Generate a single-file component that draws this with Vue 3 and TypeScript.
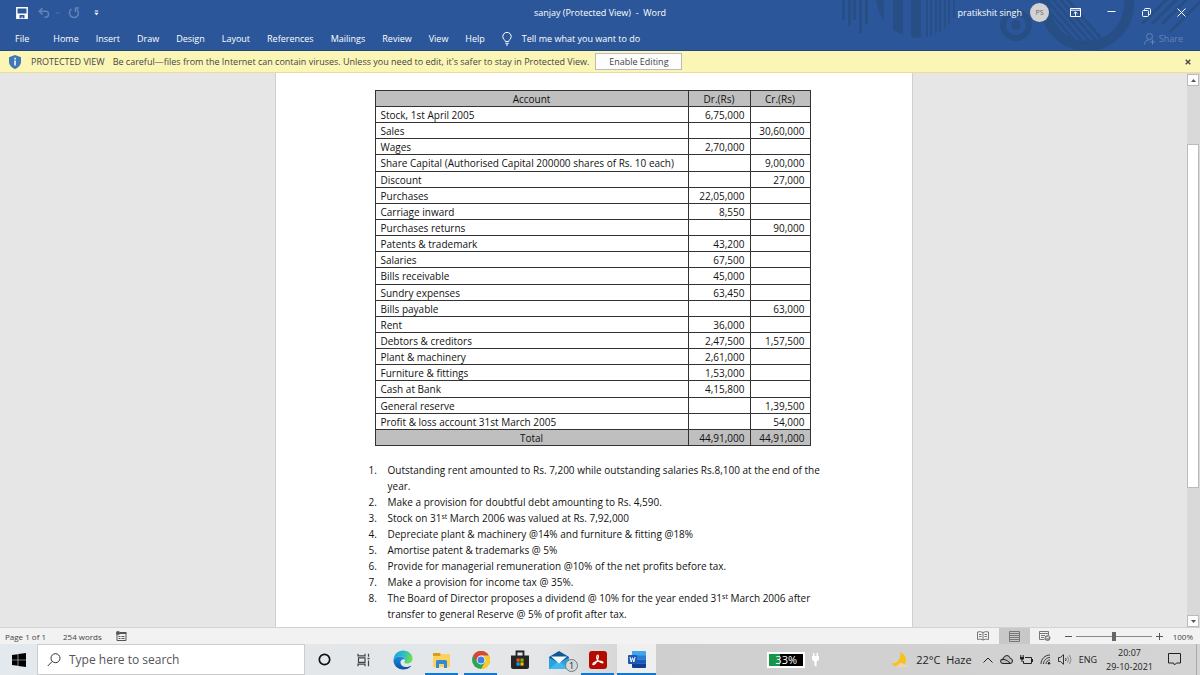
<script setup lang="ts">
import { ref } from 'vue'

interface Row {
  account: string
  dr?: string
  cr?: string
}

const tabs: string[] = ['Home', 'Insert', 'Draw', 'Design', 'Layout', 'References', 'Mailings', 'Review', 'View', 'Help']

const rows: Row[] = [
  { account: 'Stock, 1st April 2005', dr: '6,75,000' },
  { account: 'Sales', cr: '30,60,000' },
  { account: 'Wages', dr: '2,70,000' },
  { account: 'Share Capital (Authorised Capital 200000 shares of Rs. 10 each)', cr: '9,00,000' },
  { account: 'Discount', cr: '27,000' },
  { account: 'Purchases', dr: '22,05,000' },
  { account: 'Carriage inward', dr: '8,550' },
  { account: 'Purchases returns', cr: '90,000' },
  { account: 'Patents & trademark', dr: '43,200' },
  { account: 'Salaries', dr: '67,500' },
  { account: 'Bills receivable', dr: '45,000' },
  { account: 'Sundry expenses', dr: '63,450' },
  { account: 'Bills payable', cr: '63,000' },
  { account: 'Rent', dr: '36,000' },
  { account: 'Debtors & creditors', dr: '2,47,500', cr: '1,57,500' },
  { account: 'Plant & machinery', dr: '2,61,000' },
  { account: 'Furniture & fittings', dr: '1,53,000' },
  { account: 'Cash at Bank', dr: '4,15,800' },
  { account: 'General reserve', cr: '1,39,500' },
  { account: 'Profit & loss account 31st March 2005', cr: '54,000' },
]

const zoom = ref(50)
const search = ref('')
</script>

<template>
  <div class="screen">
    <header class="ribbon">
      <svg class="pattern" viewBox="0 0 370 51" width="370" height="51" aria-hidden="true">
        <defs>
          <clipPath id="disc"><circle cx="88" cy="-4" r="42" /></clipPath>
          <clipPath id="hole"><circle cx="257" cy="4" r="40" /></clipPath>
        </defs>
        <g fill="#284e86">
          <path d="M12 0h3v20h-3zM18 0h3v26h-3zM23 0h3v20h-3zM29 0h3v33h-3zM35 0h3v24h-3z" />
          <g clip-path="url(#disc)">
            <path d="M46 0h8v40h-8zM63 0h10v40H63zM81 0h10v40H81zM96 0h2v40h-2zM100 0h2v40h-2zM105 0h2v40h-2zM109 0h2v40h-2zM114 0h2v40h-2zM118 0h2v40h-2zM123 0h2v40h-2z" />
          </g>
          <circle cx="186" cy="25" r="5" />
        </g>
        <g fill="none" stroke="#284e86">
          <circle cx="186" cy="25" r="13" stroke-width="6" />
          <circle cx="257" cy="4" r="42" stroke-width="10" />
          <g clip-path="url(#hole)" stroke-width="3">
            <path d="M201-10l52 60M208-10l52 60M215-10l52 60M222-10l52 60M229-10l52 60" />
          </g>
          <path d="M312 24l26-26M322 24l27-27M332 24l27-27M340 32l32-32" stroke-width="3" />
        </g>
      </svg>
      <div class="title-row">
        <div class="quick">
          <button class="ico" aria-label="Save">
            <svg width="12" height="12" viewBox="0 0 12 12"><path d="M.8.8h10.400v10.400H.8z" fill="none" stroke="#fff" stroke-width="1.400" /><path d="M1 6.500h10v4.500H1z" fill="#fff" /><path d="M3.500 8h5v3.200H6.500V9.500h-1v1.700h-2z" fill="#2b579a" /></svg>
          </button>
          <button class="ico" aria-label="Undo">
            <svg width="12" height="12" viewBox="0 0 12 12" fill="none" stroke="#6384b6" stroke-width="1.500"><path d="M4.500 1L1.200 4.200l3.300 3.200M1.500 4.200H8c3.500 0 3.500 6-.5 6H6.500" /></svg>
          </button>
          <svg class="dim-caret" width="5" height="4" viewBox="0 0 5 4"><path d="M.5.8l2 2 2-2" fill="none" stroke="#5578ae" /></svg>
          <button class="ico redo" aria-label="Redo">
            <svg width="12" height="12" viewBox="0 0 12 12" fill="none" stroke="#6384b6" stroke-width="1.500"><path d="M3.500 2.200a4.500 4.500 0 1 0 5.300.3M11 1H7.500v4" /></svg>
          </button>
          <button class="ico more" aria-label="Customize">
            <svg width="5" height="6" viewBox="0 0 5 6" fill="#fff"><path d="M.8.500h3.400v1H.8zM.3 2.800h4.400L2.500 5.200z" /></svg>
          </button>
        </div>
        <div class="title">sanjay (Protected View) &nbsp;-&nbsp; Word</div>
        <div class="account">
          <span>pratikshit singh</span>
          <span class="avatar">PS</span>
          <button class="ico" aria-label="Ribbon options">
            <svg width="11" height="9" viewBox="0 0 11 9" fill="none" stroke="#fff"><path d="M.5.5h10v8H.5zM.5 2.200h10M5.500 7.800V4M3.700 5.600l1.800-1.800 1.800 1.800" /></svg>
          </button>
          <button class="ico" aria-label="Minimize">
            <svg width="9" height="9" viewBox="0 0 9 9"><path d="M.5 3.500h8" stroke="#fff" /></svg>
          </button>
          <button class="ico" aria-label="Restore">
            <svg width="9" height="9" viewBox="0 0 9 9" fill="none" stroke="#fff"><rect x=".5" y="2.500" width="6" height="6" rx="1" /><path d="M2.500 2.500V1.500q0-1 1-1h4q1 0 1 1v4q0 1-1 1h-1" /></svg>
          </button>
          <button class="ico" aria-label="Close">
            <svg width="9" height="9" viewBox="0 0 9 9"><path d="M.5.5l8 8m0-8l-8 8" stroke="#fff" /></svg>
          </button>
        </div>
      </div>
      <nav class="tabs">
        <button class="file">File</button>
        <button v-for="t in tabs" :key="t">{{ t }}</button>
        <button class="tell">
          <svg width="10" height="14" viewBox="0 0 10 14" fill="none" stroke="#fff"><path d="M3.300 9.500C3.300 8 .8 7 .8 4.600a4.200 4.200 0 0 1 8.400 0C9.200 7 6.700 8 6.700 9.500zM3.300 11.300h3.400M4 13h2" /></svg>
          Tell me what you want to do
        </button>
        <button class="share" disabled>
          <svg width="12" height="12" viewBox="0 0 12 12" fill="none" stroke="#6384b6"><circle cx="5.500" cy="3.500" r="3" /><path d="M.5 11.500c0-3 2-4.500 4.500-4.500M8.500 6.500v5M6 9h5" /></svg>
          Share
        </button>
      </nav>
    </header>

    <section class="notice">
      <svg width="12" height="14" viewBox="0 0 12 14"><path d="M6 0l6 2.200v4.500C12 10 9.500 12.500 6 14 2.500 12.500 0 10 0 6.700V2.200z" fill="#3f78b8" /><path d="M5.300 2.800h1.500v1.600H5.300zM5.300 5.500h1.500v5H5.300z" fill="#fff" /></svg>
      <strong>PROTECTED VIEW</strong>
      <span>Be careful—files from the Internet can contain viruses. Unless you need to edit, it's safer to stay in Protected View.</span>
      <button class="enable">Enable Editing</button>
      <button class="dismiss" aria-label="Dismiss">
        <svg width="6" height="6" viewBox="0 0 6 6"><path d="M.7.700l4.600 4.600m0-4.600L.7 5.300" stroke="#444" stroke-width="1.300" /></svg>
      </button>
    </section>

    <main class="workspace">
      <div class="canvas">
        <article class="page">
          <table>
            <thead>
              <tr><th>Account</th><th class="dr">Dr.(Rs)</th><th class="cr">Cr.(Rs)</th></tr>
            </thead>
            <tbody>
              <tr v-for="r in rows" :key="r.account">
                <td>{{ r.account }}</td><td class="num">{{ r.dr }}</td><td class="num">{{ r.cr }}</td>
              </tr>
            </tbody>
            <tfoot>
              <tr><td class="total">Total</td><td class="num">44,91,000</td><td class="num">44,91,000</td></tr>
            </tfoot>
          </table>
          <ol>
            <li>Outstanding rent amounted to Rs. 7,200 while outstanding salaries Rs.8,100 at the end of the<br>year.</li>
            <li>Make a provision for doubtful debt amounting to Rs. 4,590.</li>
            <li>Stock on 31<sup>st</sup> March 2006 was valued at Rs. 7,92,000</li>
            <li>Depreciate plant &amp; machinery @14% and furniture &amp; fitting @18%</li>
            <li>Amortise patent &amp; trademarks @ 5%</li>
            <li>Provide for managerial remuneration @10% of the net profits before tax.</li>
            <li>Make a provision for income tax @ 35%.</li>
            <li>The Board of Director proposes a dividend @ 10% for the year ended 31<sup>st</sup> March 2006 after<br>transfer to general Reserve @ 5% of profit after tax.</li>
          </ol>
        </article>
      </div>
      <div class="scrollbar">
        <button aria-label="Scroll up"><svg width="5" height="3" viewBox="0 0 5 3"><path d="M0 3L2.500 0 5 3z" fill="#555" /></svg></button>
        <div class="track"><div class="thumb"></div></div>
        <button aria-label="Scroll down"><svg width="5" height="3" viewBox="0 0 5 3"><path d="M0 0h5L2.500 3z" fill="#555" /></svg></button>
      </div>
    </main>

    <footer class="status">
      <span class="pages">Page 1 of 1</span>
      <span class="words">254 words</span>
      <svg width="11" height="10" viewBox="0 0 11 10"><path d="M1 2.500h9v7H1z" fill="none" stroke="#555" /><path d="M4 1h6.500v2H4zM2.500 5h2v1h-2zM5.500 5h3v1h-3zM2.500 7h2v1h-2zM5.500 7h3v1h-3z" fill="#555" /><circle cx="2" cy="2" r="2" fill="#555" /></svg>
      <div class="views">
        <button aria-label="Read mode"><svg width="12" height="10" viewBox="0 0 12 10" fill="none" stroke="#777"><path d="M6 1.500Q3.500 0 .5 1v7.500q3-1 5.500.5 2.500-1.500 5.500-.5V1Q8.500 0 6 1.500V9M2 3.500h2.500M2 5.500h2.500M7.500 3.500H10M7.500 5.500H10" /></svg></button>
        <button class="on" aria-label="Print layout"><svg width="11" height="11" viewBox="0 0 11 11" fill="none" stroke="#777"><path d="M.5.5h10v10H.5zM.5 2.500h10M.5 4.500h10M.5 6.500h10M.5 8.500h10" /></svg></button>
        <button aria-label="Web layout"><svg width="12" height="10" viewBox="0 0 12 10" fill="none" stroke="#777"><path d="M5.500 8.500h-5v-8h9V4M.5 2.500h9M2 4.500h4M2 6.500h3" /><circle cx="8.500" cy="7" r="2.500" fill="#999" /><path d="M7 7l3-1" stroke="#eee" /></svg></button>
      </div>
      <button class="step" aria-label="Zoom out"><svg width="7" height="7" viewBox="0 0 7 7"><path d="M0 3.500h7" stroke="#555" /></svg></button>
      <input v-model="zoom" type="range" min="0" max="100" aria-label="Zoom">
      <button class="step" aria-label="Zoom in"><svg width="7" height="7" viewBox="0 0 7 7"><path d="M0 3.500h7M3.500 0v7" stroke="#555" /></svg></button>
      <span class="percent">100%</span>
    </footer>

    <div class="taskbar">
      <button class="start" aria-label="Start">
        <svg width="14" height="14" viewBox="0 0 14 14"><path d="M0 2l5.700-.8v5.500H0zM6.300 1.100L14 0v6.700H6.300zM0 7.300h5.700v5.500L0 12zM6.300 7.300H14V14l-7.700-1.100z" /></svg>
      </button>
      <label class="search">
        <svg width="14" height="14" viewBox="0 0 14 14" fill="none" stroke="#333"><circle cx="8.500" cy="5.200" r="4.500" /><path d="M5.300 8.400L.7 13" /></svg>
        <input v-model="search" type="text" placeholder="Type here to search" aria-label="Type here to search">
      </label>
      <div class="apps">
        <button aria-label="Cortana"><svg width="13" height="13" viewBox="0 0 13 13"><circle cx="6.500" cy="6.500" r="5.200" fill="none" stroke="#111" stroke-width="1.700" /></svg></button>
        <button aria-label="Task view"><svg width="14" height="14" viewBox="0 0 14 14" fill="none" stroke="#444" stroke-width="1.200"><path d="M1 .8v2h7v-2M1 13.200v-2h7v2M1.500 4.800h6.500v4.500H1.500zM11.500.8v3M11.500 7.500v5.700" /><path d="M10.500 4.800h2v1.500h-2z" fill="#444" stroke="none" /></svg></button>
        <button aria-label="Edge">
          <svg width="20" height="20" viewBox="0 0 20 20">
            <defs>
              <linearGradient id="ea" x1="0" x2="1" y1="0" y2=".3"><stop stop-color="#1b9de2" /><stop offset=".6" stop-color="#2dbfc2" /><stop offset="1" stop-color="#6bdc52" /></linearGradient>
              <linearGradient id="eb" x1="0" x2="0" y1="0" y2="1"><stop stop-color="#1b8fe0" /><stop offset="1" stop-color="#0c4fa8" /></linearGradient>
            </defs>
            <path d="M.5 10C1 4 5 .5 10 .5c6 0 9.500 4 9.500 8 0 3.500-2.500 5-5.500 5-2 0-3-1-2.500-1.800C13 9.500 11 7 8 6.500 4.500 6 1.500 7.500.5 10z" fill="url(#ea)" />
            <path d="M.5 10C1.500 7.500 4.500 6 8 6.500c2 .4 3.600 1.700 3.900 3.200C10 8.500 7 10 7.500 13c.6 3.200 4.500 5 8.500 3.500 1-.4 2-.9 2.200-.5C16.500 18.500 13.500 19.500 10 19.500 4.500 19.500.3 15 .5 10z" fill="url(#eb)" />
          </svg>
        </button>
        <button class="open" aria-label="File Explorer"><svg width="18" height="16" viewBox="0 0 18 16"><path d="M0 1h7l1 2v3H0z" fill="#dc9d16" /><path d="M0 4h7l1-2h9v13H0z" fill="#fbd25c" /><path d="M3 16V9.500Q3 8 4.500 8h8Q14 8 14 9.500V16h-3v-4H6v4z" fill="#348ad0" /></svg></button>
        <button class="open" aria-label="Chrome"><svg width="18" height="18" viewBox="0 0 18 18"><circle cx="9" cy="9" r="9" fill="#2da450" /><path d="M1.200 4.500A9 9 0 0 1 16.800 4.500H9L5.100 11.200z" fill="#db4437" /><path d="M16.800 4.500A9 9 0 0 1 9 18l3.900-6.700L9 4.500z" fill="#fbc928" /><circle cx="9" cy="9" r="4.400" fill="#fff" /><circle cx="9" cy="9" r="3.500" fill="#3f7de8" /></svg></button>
        <button aria-label="Store"><svg width="20" height="20" viewBox="0 0 20 20"><path d="M6.500 6V1.500h7V6" fill="none" stroke="#222" stroke-width="1.800" /><path d="M1 5.500h18V17q0 2-2 2H3q-2 0-2-2z" fill="#252525" /><path d="M6.500 8.500h3.200v3.200H6.500z" fill="#f25022" /><path d="M10.400 8.500h3.200v3.200h-3.200z" fill="#7fba00" /><path d="M6.500 12.400h3.200v3.200H6.500z" fill="#00a4ef" /><path d="M10.400 12.400h3.200v3.200h-3.200z" fill="#ffb900" /></svg></button>
        <button class="mail" aria-label="Mail">
          <svg width="20" height="18" viewBox="0 0 20 18"><path d="M0 6l10-6 10 6v12H0z" fill="#0f5797" /><path d="M0 6.500L10 12l10-5.500V18H0z" fill="#27a3e2" /><path d="M0 18l10-8 10 8z" fill="#41b9ef" /><path d="M2 5.500h16l-8 7z" fill="#f6f8fa" /></svg>
          <span class="badge">1</span>
        </button>
        <button class="open" aria-label="Acrobat"><svg width="18" height="18" viewBox="0 0 18 18"><rect width="18" height="18" rx="3" fill="#b30b00" /><path d="M4 13.500c-1-1 3-3 5-3.300s5 .2 5 1.200-3.500 0-5.200-2S7.600 4 8.700 4s.8 3.300-.7 6-3.200 4.300-4 3.500z" fill="none" stroke="#fff" stroke-width="1.200" /></svg></button>
        <button class="open current" aria-label="Word"><svg width="18" height="17" viewBox="0 0 18 17"><path d="M4 0h13q1 0 1 1v4H4z" fill="#41a5ee" /><path d="M4 4.500h14v4.200H4z" fill="#2b7cd3" /><path d="M4 8.500h14v4.200H4z" fill="#185abd" /><path d="M4 12.500h14V16q0 1-1 1H5q-1 0-1-1z" fill="#103f91" /><rect y="4" width="9" height="9" rx="1" fill="#1d58b5" /><path d="M2 6l1.200 5 1.300-4.300L5.800 11 7 6" fill="none" stroke="#fff" /></svg></button>
      </div>
      <div class="tray">
        <div class="charge"><span>33%</span></div>
        <svg class="plug" width="7" height="13" viewBox="0 0 7 13" fill="#fff"><path d="M1 0h1.500v3H1zM4.500 0H6v3H4.500zM0 3h7v2q0 3-2.500 3.500V13h-2V8.500Q0 8 0 5z" /></svg>
        <svg class="moon" width="18" height="16" viewBox="0 0 18 16"><path d="M9 0c8 3 8 13 .5 14.500C5 15.500 2 14 .5 11.500 6 12 10.500 7 9 0z" fill="#f8c21c" /><path d="M5 15q0-2 2.200-2 1-2.500 3.500-2t2.300 2q3-.5 4.500 2z" fill="#efd3ae" /></svg>
        <span class="weather">22°C&nbsp; Haze</span>
        <svg width="10" height="6" viewBox="0 0 10 6"><path d="M.5 5.500L5 1l4.500 4.500" fill="none" stroke="#222" /></svg>
        <svg width="13" height="9" viewBox="0 0 13 9" fill="none" stroke="#222"><path d="M3 8.500q-2.500 0-2.500-2.300T3 4q.8-3.500 4-3.500 2.500 0 3.300 3 2.200 0 2.200 2.500T10 8.500z" fill="#bbb" /><path d="M1 5q4-2 9 3" /></svg>
        <svg width="13" height="10" viewBox="0 0 13 10" fill="none" stroke="#222"><path d="M5 2.500h6.500v6H3.500V6M12.500 4v3M.8 0v2M3.200 0v2" /><path d="M0 2h4v2L2.500 5v2h-1V5L0 4z" fill="#222" stroke="none" /></svg>
        <svg width="11" height="11" viewBox="0 0 11 11" fill="none" stroke="#333"><path d="M1 10C1 5 5 1 10 1M3.500 10c0-3.500 3-6.500 6.500-6.500M6 10c0-2.200 1.800-4 4-4" /><circle cx="9" cy="9.200" r="1.200" fill="#222" stroke="none" /></svg>
        <svg width="14" height="11" viewBox="0 0 14 11" fill="none" stroke="#333"><path d="M.5 3.500h2l3-2.800v9.600l-3-2.800h-2zM7.500 4q1 1.500 0 3" /><path d="M9.500 2.500q2 3 0 6M11.500 1q3 4.500 0 9" stroke="#888" /></svg>
        <span class="lang">ENG</span>
        <div class="clock"><span>20:07</span><span>29-10-2021</span></div>
        <button class="action" aria-label="Notifications"><svg width="13" height="13" viewBox="0 0 13 13" fill="none" stroke="#222"><path d="M.5.5h12v9.500H8.500L6.500 12 5.500 10h-5z" /></svg></button>
        <span class="peek"></span>
      </div>
    </div>
  </div>
</template>

<style>
body {
  margin: 0;
}
</style>

<style scoped>
.screen {
  display: flex;
  flex-direction: column;
  height: 100vh;
  overflow: hidden;
  font-family: "Open Sans", "Noto Sans", sans-serif;
  font-size: 8px;
  color: #333;
}
button {
  display: flex;
  align-items: center;
  justify-content: center;
  padding: 0;
  border: 0;
  background: none;
  color: inherit;
  font: inherit;
  white-space: nowrap;
}
svg {
  display: block;
  flex: none;
}

/* ribbon */
.ribbon {
  position: relative;
  flex: none;
  background: #2b579a;
  color: #fff;
  border-bottom: 1px solid #22497f;
}
.pattern {
  position: absolute;
  top: 0;
  right: 0;
}
.title-row {
  position: relative;
  display: grid;
  grid-template-columns: 1fr auto 1fr;
  align-items: center;
  height: 25px;
}
.quick {
  display: flex;
  align-items: center;
  padding-left: 16px;
}
.quick .ico + .ico {
  margin-left: 10px;
}
.dim-caret {
  margin: 0 8px 0 5px;
}
.quick .redo + .more {
  margin-left: 14px;
}
.title {
  font-size: 9px;
}
.account {
  display: flex;
  align-items: center;
  justify-content: flex-end;
  padding-right: 14px;
  font-size: 9px;
}
.avatar {
  width: 19px;
  margin: 0 21px 0 8px;
  border-radius: 50%;
  background: #d2d2d2;
  color: #666;
  font-size: 7px;
  line-height: 19px;
  text-align: center;
}
.account .ico + .ico {
  margin-left: 26px;
}
.tabs {
  position: relative;
  display: flex;
  align-items: center;
  gap: 17px;
  height: 25px;
  padding: 2px 17px 0 15px;
  box-sizing: border-box;
  font-size: 9px;
}
.file {
  margin-right: 7px;
}
.tell {
  gap: 10px;
}
.share {
  gap: 3px;
  margin-left: auto;
  color: #6384b6;
}

/* protected view bar */
.notice {
  display: flex;
  flex: none;
  align-items: center;
  height: 22px;
  padding: 0 9px;
  box-sizing: border-box;
  border-bottom: 1px solid #e6dfa0;
  background: #fcf6b6;
  color: #444;
  font-size: 9px;
  white-space: nowrap;
}
.notice strong {
  margin: 0 8px 0 10px;
  font-weight: 400;
}
.enable {
  width: 87px;
  height: 17px;
  margin-left: 6px;
  border: 1px solid #bbb;
  background: #fdfdfd;
}
.dismiss {
  margin-left: auto;
}

/* document */
.workspace {
  display: flex;
  flex: 1;
  min-height: 0;
  background: #e6e6e6;
}
.canvas {
  display: flex;
  flex: 1;
  justify-content: center;
  overflow: hidden;
}
.page {
  flex: 0 1 638px;
  padding: 17px 80px 0 93px;
  box-sizing: border-box;
  border: solid #cfcfcf;
  border-width: 0 1px;
  background: #fff;
  color: #111;
  font-size: 10px;
  line-height: 16px;
}
table {
  width: 436px;
  height: 356px;
  margin-left: 6px;
  border-collapse: collapse;
  table-layout: fixed;
}
th,
td {
  height: 14px;
  padding: 1px 5px 0;
  border: 1px solid #333;
  font-weight: 400;
  line-height: 14px;
  white-space: nowrap;
}
th,
tfoot td {
  background: #bfbfbf;
}
.dr {
  width: 51px;
}
.cr {
  width: 49px;
}
.num {
  text-align: right;
}
.total {
  text-align: center;
}
ol {
  margin: 16px 0 0;
  padding-left: 19px;
  list-style: none;
  counter-reset: note;
  white-space: nowrap;
}
li {
  counter-increment: note;
}
li::before {
  content: counter(note) ".";
  display: inline-block;
  width: 19px;
  margin-left: -19px;
}
sup {
  font-size: 7px;
  line-height: 0;
  vertical-align: 3px;
}
.scrollbar {
  display: flex;
  flex-direction: column;
  width: 13px;
  padding: 1px 1px 0 0;
  box-sizing: border-box;
  background: #d9d9d9;
}
.scrollbar button {
  height: 12px;
  border: 1px solid #bbb;
  background: #fdfdfd;
}
.track {
  flex: 1;
  padding-top: 58px;
}
.thumb {
  height: 73%;
  border: 1px solid #bbb;
  box-sizing: border-box;
  background: #fff;
}

/* status bar */
.status {
  display: flex;
  flex: none;
  align-items: center;
  height: 17px;
  padding: 0 7px 0 5px;
  box-sizing: border-box;
  border-top: 1px solid #d2d2d2;
  background: #f2f2f2;
  color: #444;
}
.pages {
  width: 58px;
}
.words {
  width: 53px;
}
.views {
  display: flex;
  align-self: stretch;
  margin-left: auto;
}
.views button {
  width: 31px;
}
.views .on {
  background: #c8c8c8;
}
.step {
  margin: 0 4px;
}
.status input {
  width: 76px;
  height: 11px;
  margin: 0;
  appearance: none;
  background: linear-gradient(#888, #888) center / 100% 1px no-repeat;
}
.status input::-webkit-slider-thumb {
  width: 4px;
  height: 9px;
  appearance: none;
  background: #666;
}
.percent {
  margin-left: 6px;
}

/* taskbar */
.taskbar {
  display: flex;
  flex: none;
  height: 31px;
  background: linear-gradient(90deg, #e3e9ec, #e4e6e8 45%, #cfcfcf 55%, #d4d4d4);
  color: #222;
}
.start {
  width: 37px;
}
.search {
  display: flex;
  align-items: center;
  gap: 8px;
  width: 268px;
  padding-left: 9px;
  box-sizing: border-box;
  border: 1px solid #ccc;
  background: #fff;
}
.search input {
  flex: 1;
  min-width: 0;
  padding: 0;
  border: 0;
  outline: 0;
  background: none;
  font-family: inherit;
  font-size: 12px;
}
.search input::placeholder {
  color: #555;
  opacity: 1;
}
.apps {
  display: flex;
}
.apps button {
  position: relative;
  width: 39px;
}
.apps .open {
  box-shadow: inset 0 -2px #0f78d4;
  margin: 0 3px;
  width: 33px;
}
.apps .current {
  width: 39px;
  margin: 0;
  background: #efefef;
}
.badge {
  position: absolute;
  right: 0;
  bottom: 3px;
  width: 11px;
  border: 1px solid #777;
  border-radius: 50%;
  background: #d3dadd;
  font-size: 9px;
  line-height: 11px;
}
.tray {
  display: flex;
  align-items: center;
  gap: 7px;
  margin-left: auto;
  font-size: 10px;
}
.charge {
  width: 34px;
  border: 2px solid #fff;
  background: linear-gradient(90deg, #17964a 33%, #000 33%);
  color: #fff;
  font-size: 11px;
  line-height: 12px;
  text-align: center;
}
.moon {
  margin-left: 65px;
}
.weather {
  margin-right: 4px;
  font-size: 11px;
}
.lang {
  margin-right: 2px;
  font-size: 9px;
}
.clock {
  display: flex;
  flex-direction: column;
  align-items: center;
  font-size: 9px;
  line-height: 14px;
}
.action {
  margin: 0 8px;
}
.peek {
  align-self: stretch;
  width: 3px;
  border-left: 1px solid #aaa;
}
</style>
